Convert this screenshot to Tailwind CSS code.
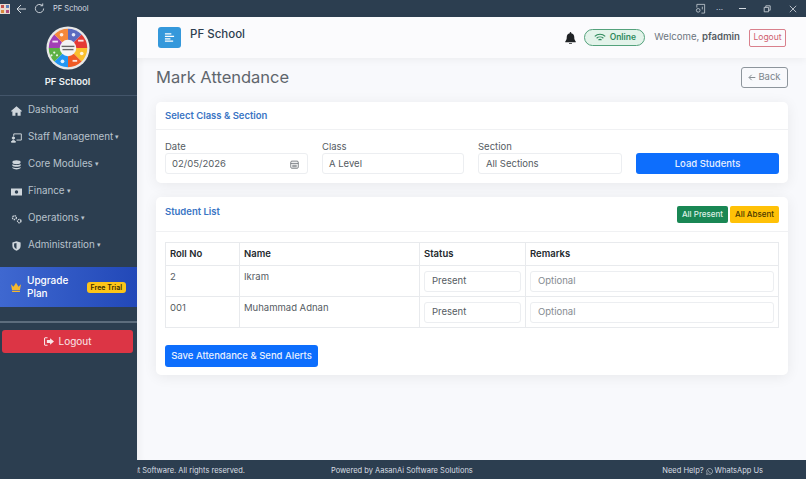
<!DOCTYPE html>
<html>
  <head>
    <meta charset="UTF-8" />
    <script src="https://cdn.jsdelivr.net/npm/@tailwindcss/browser@4"></script>
  </head>
  <body class="h-[479px] w-[806px] overflow-hidden flex flex-col bg-[#2c3e50] font-['Inter','Liberation_Sans',sans-serif]">
    <!-- window title bar -->
    <div class="h-[17px] shrink-0 flex items-center text-[#d5dbe1]">
      <svg viewBox="0 0 10 10" class="w-[10px] h-[10px]">
        <rect width="10" height="10" fill="#e9d9cf" />
        <rect x="1" y="1" width="3" height="3" fill="#c0504d" />
        <rect x="6" y="1" width="3" height="3" fill="#5b7fbd" />
        <rect x="1" y="6" width="3" height="3" fill="#d98a3d" />
        <rect x="6" y="6" width="3" height="3" fill="#b04a7a" />
      </svg>
      <svg viewBox="0 0 12 12" class="w-[12px] h-[12px] ml-[5px]" fill="none" stroke="currentColor"><path d="M11 6H2M6 2 2 6l4 4" /></svg>
      <svg viewBox="0 0 12 12" class="w-[11px] h-[11px] ml-[7px]" fill="none" stroke="currentColor"><path d="M10.500 6a4.500 4.500 0 1 1-1.500-3.300M9.500 0.500v2.500H7" /></svg>
      <span class="ml-[8px] text-[7.500px]">PF School</span>
      <div class="ml-auto flex items-center">
        <svg viewBox="0 0 12 12" class="w-[11px] h-[11px]" fill="none" stroke="currentColor" stroke-width="0.8"><path d="M2 5V1.500h8.500v9.500H7" /><circle cx="3.500" cy="8" r="2" /><path d="M8 4v3" /></svg>
        <span class="ml-[10px] text-[8px] leading-none">···</span>
        <span class="ml-[16px] w-[7px] h-px bg-current"></span>
        <svg viewBox="0 0 10 10" class="w-[8px] h-[8px] ml-[17px]" fill="none" stroke="currentColor"><path d="M1.500 3h5.500v5.500H1.500zM3.500 3V1h5.500v5.500H7" /></svg>
        <svg viewBox="0 0 10 10" class="w-[8px] h-[8px] ml-[18px] mr-[9px]" fill="none" stroke="currentColor"><path d="m1 1 8 8M9 1 1 9" /></svg>
      </div>
    </div>

    <div class="flex-1 flex min-h-0">
      <!-- sidebar -->
      <aside class="w-[137px] shrink-0 bg-[#2c3e50] flex flex-col">
        <div class="h-[79px] shrink-0 border-b border-[#43556a] flex flex-col items-center pt-[9px] pr-[2px]">
          <svg viewBox="0 0 48 48" class="w-[44px] h-[44px]">
            <circle cx="24" cy="24" r="23.500" fill="#e8e8e8" />
            <path d="M24 24V3A21 21 0 0 1 38.850 9.150Z" fill="#5c6bc0" />
            <path d="M24 24 38.850 9.150A21 21 0 0 1 45 24Z" fill="#e53935" />
            <path d="M24 24H45A21 21 0 0 1 38.850 38.850Z" fill="#fbc02d" />
            <path d="M24 24 38.850 38.850A21 21 0 0 1 24 45Z" fill="#ef5a24" />
            <path d="M24 24V45A21 21 0 0 1 9.150 38.850Z" fill="#2196f3" />
            <path d="M24 24 9.150 38.850A21 21 0 0 1 3 24Z" fill="#5cb144" />
            <path d="M24 24H3A21 21 0 0 1 9.150 9.150Z" fill="#a23fb5" />
            <path d="M24 24 9.150 9.150A21 21 0 0 1 24 3Z" fill="#f5883a" />
            <g fill="#fff" fill-opacity="0.85">
              <circle cx="30" cy="9.500" r="2" />
              <rect x="35" y="15" width="6" height="2" />
              <circle cx="39" cy="30" r="2" />
              <rect x="29" y="37" width="5" height="2" />
              <circle cx="18" cy="38.500" r="2" />
              <circle cx="9" cy="29" r="1.200" /><circle cx="12" cy="32" r="1.200" /><circle cx="6" cy="32" r="1.200" />
              <rect x="7" y="16" width="6" height="2" />
              <circle cx="17" cy="9.500" r="2" />
            </g>
            <circle cx="24" cy="24" r="9" fill="#f4f4f4" />
            <rect x="17" y="21.500" width="14" height="1.500" fill="#666" />
            <rect x="18" y="25" width="12" height="1.500" fill="#666" />
          </svg>
          <span class="mt-[5px] text-[9.500px] font-semibold text-[#eef1f4] leading-[13px]">PF School</span>
        </div>

        <nav class="flex flex-col pt-px text-[9.800px] text-[#b8c2cc]">
          <a class="h-[27px] flex items-center pl-[11px] gap-[6px]">
            <svg viewBox="0 0 16 14" class="w-[11px] h-[10px]" fill="#cfd6dc"><path d="M8 0 0 7l1 1 1-.8V14h4.500V9.500h3V14H14V7.200l1 .8 1-1Z" /></svg>
            Dashboard
          </a>
          <a class="h-[27px] flex items-center pl-[11px] gap-[6px]">
            <svg viewBox="0 0 16 14" class="w-[11px] h-[10px]" fill="none" stroke="#cfd6dc" stroke-width="1.400"><path d="M4 4V1h11v9H8" /><circle cx="3.500" cy="7" r="1.700" fill="#cfd6dc" /><path d="M0.500 13c0-3 6-3 6 0Z" fill="#cfd6dc" /></svg>
            Staff Management<span class="-ml-[4px] text-[7px]">▾</span>
          </a>
          <a class="h-[27px] flex items-center pl-[11px] gap-[6px]">
            <svg viewBox="0 0 16 14" class="w-[11px] h-[10px]" fill="#cfd6dc"><ellipse cx="8" cy="3" rx="6" ry="2.800" /><path d="M2 5.500c2 2 10 2 12 0v2.500c-2 2-10 2-12 0ZM2 10c2 2 10 2 12 0v1.500c-2 2.500-10 2.500-12 0Z" /></svg>
            Core Modules<span class="-ml-[4px] text-[7px]">▾</span>
          </a>
          <a class="h-[27px] flex items-center pl-[11px] gap-[6px]">
            <svg viewBox="0 0 16 14" class="w-[11px] h-[10px]" fill="#cfd6dc"><path fill-rule="evenodd" d="M0 2h16v10H0Zm8 2.500a2.500 2.500 0 1 0 0 5 2.500 2.500 0 0 0 0-5Z" /></svg>
            Finance<span class="-ml-[4px] text-[7px]">▾</span>
          </a>
          <a class="h-[27px] flex items-center pl-[11px] gap-[6px]">
            <svg viewBox="0 0 16 14" class="w-[11px] h-[10px]" fill="none" stroke="#cfd6dc" stroke-width="2"><circle cx="5" cy="5" r="2.800" stroke-dasharray="2 1" /><circle cx="12" cy="10" r="2.500" stroke-dasharray="2 1" /></svg>
            Operations<span class="-ml-[4px] text-[7px]">▾</span>
          </a>
          <a class="h-[27px] flex items-center pl-[11px] gap-[6px]">
            <svg viewBox="0 0 16 14" class="w-[11px] h-[10px]" fill="#cfd6dc"><path fill-rule="evenodd" d="M8 0 14 2v5c0 3.500-3 6-6 7-3-1-6-3.500-6-7V2Zm0 2.500L4.500 3.500V7c0 2 1.800 3.500 3.500 4.300Z" /></svg>
            Administration<span class="-ml-[4px] text-[7px]">▾</span>
          </a>
        </nav>

        <div class="mt-[8px] h-[40px] shrink-0 flex items-center pl-[10px] pr-[11px] bg-gradient-to-r from-[#3f68d0] to-[#2248b8] text-white">
          <svg viewBox="0 0 16 14" class="w-[12px] h-[10px]" fill="#f5b82e"><path d="M1 3 4.500 6.500 8 1l3.500 5.500L15 3l-1.500 8.500h-11ZM2.500 12.500h11V14h-11Z" /></svg>
          <span class="ml-[5px] text-[10px] leading-[13.500px] font-medium">Upgrade<br />Plan</span>
          <span class="ml-auto h-[11px] px-[4px] rounded-[3px] bg-[#fcc419] text-[#3a2c00] text-[7px] leading-[11px] font-semibold">Free Trial</span>
        </div>

        <div class="mt-[14px] border-t-2 border-[#5d6d7d]"></div>
        <div class="mt-[7px] mx-[2px] w-[131px] h-[23px] rounded-[3px] bg-[#dc3545] text-[#f8e6e8] text-[10px] flex items-center justify-center gap-[5px]">
          <svg viewBox="0 0 14 12" class="w-[10px] h-[9px]" fill="currentColor"><path d="M5 0H1.500L0 1.500v9L1.500 12H5v-1.500H1.500v-9H5ZM8.500 1.500V4H4v4h4.500v2.500L14 6Z" /></svg>
          Logout
        </div>
      </aside>

      <!-- main -->
      <main class="flex-1 min-w-0 flex flex-col bg-[#f8f9fc]">
        <header class="relative h-[41px] shrink-0 bg-[#fbfbfd] shadow-[0_2px_8px_rgba(0,0,0,0.05)] flex items-center pl-[21px] pr-[20px]">
          <div class="w-[23px] h-[21px] rounded-[3px] bg-[#3498db] flex items-center justify-center">
            <svg viewBox="0 0 12 12" class="w-[11px] h-[11px]" fill="none" stroke="#fff" stroke-width="1.400"><path d="M1 2h7M1 4.700h10M1 7.400h6M1 10h9" /></svg>
          </div>
          <span class="ml-[9px] -mt-[5px] text-[11.500px] font-medium text-[#2c3e50]">PF School</span>
          <svg viewBox="0 0 14 16" class="ml-auto w-[11px] h-[12px]" fill="#1f2225"><path d="M7 0a1 1 0 0 1 1 1v.700c2.500.500 4 2.500 4 5 0 3 .500 4 2 5.800v1H0v-1c1.500-1.800 2-2.800 2-5.800 0-2.500 1.500-4.500 4-5V1a1 1 0 0 1 1-1ZM5 15h4a2 2 0 0 1-4 0Z" /></svg>
          <div class="ml-[8px] w-[61px] h-[17px] rounded-full border border-[#54a27c] bg-[#e3f3ea] flex items-center justify-center gap-[4px] text-[8.500px] font-semibold text-[#2f8a5c]">
            <svg viewBox="0 0 16 12" class="w-[12px] h-[9px]" fill="none" stroke="#2f8a5c" stroke-width="1.500"><path d="M1 4.500c4-3.800 10-3.800 14 0M3.500 7c2.500-2.300 6.500-2.300 9 0M6 9.300c1-.900 3-.900 4 0" /></svg>
            Online
          </div>
          <span class="ml-[9px] text-[9.600px] text-[#6c757d]">Welcome, <b class="font-semibold text-[#555c63]">pfadmin</b></span>
          <span class="ml-[9px] w-[37px] h-[18px] rounded-[2px] border border-[#d9808c] text-[#d0606f] text-[8.500px] flex items-center justify-center">Logout</span>
        </header>

        <div class="flex-1 min-h-0 pl-[19px] pr-[18px] shadow-[inset_8px_0_8px_-7px_rgba(0,0,0,0.06)]">
          <div class="mt-[9px] flex items-center justify-between">
            <h1 class="text-[16.500px] leading-[21px] text-[#5f666d]">Mark Attendance</h1>
            <span class="w-[47px] h-[21px] rounded-[3px] border border-[#8d959c] text-[#7c848b] text-[9.500px] flex items-center justify-center gap-[2px]">
              <svg viewBox="0 0 12 10" class="w-[8px] h-[7px]" fill="none" stroke="currentColor" stroke-width="1.400"><path d="M11 5H2M5.500 1 1.500 5l4 4" /></svg>
              Back
            </span>
          </div>

          <section class="mt-[14px] h-[81px] rounded-[5px] bg-white shadow-[0_2px_14px_rgba(0,0,0,0.07)]">
            <div class="h-[28px] pt-[2px] px-[9px] border-b border-[#f0f1f3] flex items-center text-[9.500px] font-semibold text-[#3a75c4]">Select Class &amp; Section</div>
            <div class="pt-[9px] px-[9px] grid grid-cols-[143px_142px_144px_143px] gap-x-[14px] text-[9.500px] text-[#555c63]">
              <div>
                <div class="h-[14px] pt-px leading-[14px]">Date</div>
                <div class="h-[21px] rounded-[3px] border border-[#eceef1] pt-px pl-[6px] pr-[8px] flex items-center justify-between">02/05/2026
                  <svg viewBox="0 0 12 12" class="w-[9px] h-[9px]" fill="none" stroke="#555c63"><rect x="1" y="1.500" width="10" height="9.500" rx="1.500" /><path d="M1 4.500h10M3 7h6M3 9h6" /></svg>
                </div>
              </div>
              <div>
                <div class="h-[14px] pt-px leading-[14px]">Class</div>
                <div class="h-[21px] rounded-[3px] border border-[#eceef1] pt-px pl-[6px] flex items-center">A Level</div>
              </div>
              <div>
                <div class="h-[14px] pt-px leading-[14px]">Section</div>
                <div class="h-[21px] rounded-[3px] border border-[#eceef1] pt-px pl-[7px] flex items-center">All Sections</div>
              </div>
              <div class="pt-[14px]">
                <div class="h-[21px] pt-px rounded-[3px] bg-[#0d6efd] text-[#e8f0ff] flex items-center justify-center font-medium">Load Students</div>
              </div>
            </div>
          </section>

          <section class="mt-[14px] h-[178px] rounded-[5px] bg-white shadow-[0_2px_14px_rgba(0,0,0,0.07)]">
            <div class="h-[35px] px-[9px] border-b border-[#f0f1f3] flex items-center justify-between">
              <span class="-mt-[4px] text-[9.500px] font-semibold text-[#3a75c4]">Student List</span>
              <div class="flex gap-[2px] text-[8px] font-medium">
                <span class="w-[51px] h-[17px] rounded-[2px] bg-[#198754] text-[#dff0e7] flex items-center justify-center">All Present</span>
                <span class="w-[49px] h-[17px] rounded-[2px] bg-[#ffc107] text-[#4a3800] flex items-center justify-center">All Absent</span>
              </div>
            </div>
            <div class="pt-[10px] px-[9px]">
              <table class="w-[614px] table-fixed border-collapse text-[9.500px] text-[#555c63]">
                <colgroup>
                  <col class="w-[74px]" /><col class="w-[180px]" /><col class="w-[106px]" /><col />
                </colgroup>
                <thead>
                  <tr class="h-[23px] text-[#24292e] font-semibold text-left">
                    <th class="border border-[#e8eaed] pl-[4px] font-semibold">Roll No</th>
                    <th class="border border-[#e8eaed] pl-[4px] font-semibold">Name</th>
                    <th class="border border-[#e8eaed] pl-[4px] font-semibold">Status</th>
                    <th class="border border-[#e8eaed] pl-[4px] font-semibold">Remarks</th>
                  </tr>
                </thead>
                <tbody>
                  <tr class="h-[31px]">
                    <td class="border border-[#e8eaed] pl-[4px] pt-[4px] align-top">2</td>
                    <td class="border border-[#e8eaed] pl-[4px] pt-[4px] align-top">Ikram</td>
                    <td class="border border-[#e8eaed] px-[4px]"><div class="h-[21px] rounded-[3px] border border-[#eceef1] pl-[7px] flex items-center">Present</div></td>
                    <td class="border border-[#e8eaed] px-[4px]"><div class="h-[21px] rounded-[3px] border border-[#eceef1] pl-[7px] flex items-center text-[#858b91]">Optional</div></td>
                  </tr>
                  <tr class="h-[31px]">
                    <td class="border border-[#e8eaed] pl-[4px] pt-[4px] align-top">001</td>
                    <td class="border border-[#e8eaed] pl-[4px] pt-[4px] align-top">Muhammad Adnan</td>
                    <td class="border border-[#e8eaed] px-[4px]"><div class="h-[21px] rounded-[3px] border border-[#eceef1] pl-[7px] flex items-center">Present</div></td>
                    <td class="border border-[#e8eaed] px-[4px]"><div class="h-[21px] rounded-[3px] border border-[#eceef1] pl-[7px] flex items-center text-[#858b91]">Optional</div></td>
                  </tr>
                </tbody>
              </table>
              <div class="mt-[17px] w-[153px] h-[22px] rounded-[3px] bg-[#0d6efd] text-[#e8f0ff] text-[9.500px] font-medium flex items-center justify-center">Save Attendance &amp; Send Alerts</div>
            </div>
          </section>
        </div>
      </main>
    </div>

    <footer class="h-[19px] shrink-0 bg-[#2c3e50] pl-[137px] pt-[3px] text-[7.500px] text-[#d9dee3] flex items-center">
      <div class="w-[108px] overflow-hidden whitespace-nowrap flex justify-end"><span class="shrink-0">PF School Management Software. All rights reserved.</span></div>
      <span class="ml-[86px]">Powered by AasanAi Software Solutions</span>
      <span class="ml-auto mr-[43px] flex items-center gap-[2px]">Need Help?
        <svg viewBox="0 0 12 12" class="w-[7px] h-[7px]" fill="none" stroke="currentColor"><path d="M1 11l.8-2.800A5 5 0 1 1 3.800 10.200ZM4 4c0 2 2 4 4 4" /></svg>
        WhatsApp Us</span>
    </footer>
  </body>
</html>
